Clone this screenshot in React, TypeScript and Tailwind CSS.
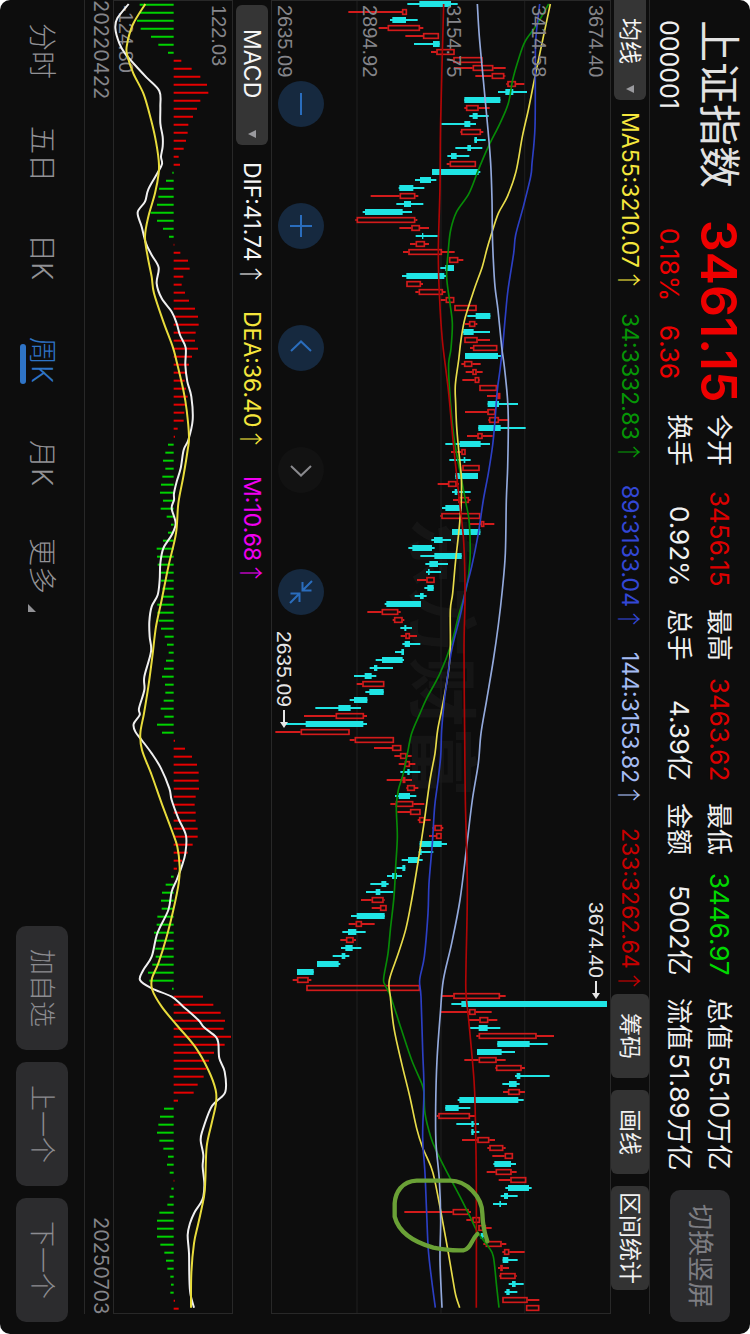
import React from "react";

type Candle = [kind: "r" | "c", low: number, start: number, end: number, high: number];
type Point = [number, number];

const STEP = 24;

const candles: Candle[] = [
  ["c", 412, 448, 543, 563], ["r", 235, 396, 411, 411], ["c", 360, 367, 408, 443], ["r", 326, 353, 450, 460],
  ["r", 406, 459, 507, 507], ["c", 432, 489, 509, 509], ["r", 483, 499, 554, 554], ["r", 540, 550, 638, 638],
  ["r", 552, 608, 670, 707], ["r", 616, 665, 703, 706], ["r", 709, 712, 738, 763], ["c", 684, 706, 730, 771],
  ["c", 583, 583, 691, 691], ["r", 583, 588, 626, 659], ["c", 598, 608, 623, 656], ["c", 514, 583, 601, 618],
  ["r", 571, 573, 633, 640], ["c", 613, 613, 621, 647], ["c", 556, 592, 603, 637], ["c", 532, 543, 560, 598],
  ["r", 530, 539, 618, 618], ["c", 486, 486, 626, 631], ["c", 435, 450, 483, 499], ["c", 386, 388, 430, 463],
  ["r", 302, 389, 436, 445], ["c", 379, 402, 423, 460], ["c", 278, 285, 398, 426], ["r", 256, 260, 436, 442],
  ["r", 388, 424, 450, 477], ["c", 437, 456, 460, 503], ["r", 420, 437, 465, 477], ["r", 399, 415, 516, 554],
  ["r", 537, 537, 565, 580], ["c", 511, 526, 552, 552], ["c", 396, 409, 523, 528], ["r", 409, 409, 453, 459],
  ["r", 436, 446, 519, 527], ["r", 512, 527, 553, 553], ["r", 553, 553, 620, 620], ["c", 592, 617, 661, 661],
  ["r", 585, 597, 616, 622], ["c", 579, 580, 611, 660], ["r", 583, 583, 623, 660], ["r", 600, 609, 682, 682],
  ["c", 585, 585, 684, 693], ["r", 574, 582, 607, 632], ["r", 587, 607, 620, 638], ["r", 577, 614, 628, 630],
  ["r", 628, 628, 681, 681], ["r", 651, 682, 691, 691], ["c", 653, 653, 687, 744], ["r", 585, 652, 676, 676],
  ["r", 655, 657, 687, 714], ["c", 625, 625, 692, 767], ["r", 591, 622, 638, 668], ["c", 526, 569, 632, 660],
  ["r", 543, 574, 587, 587], ["c", 538, 581, 586, 602], ["r", 577, 577, 629, 629], ["c", 556, 556, 624, 624],
  ["r", 503, 534, 560, 567], ["c", 546, 554, 562, 602], ["r", 549, 565, 597, 602], ["c", 516, 526, 575, 575],
  ["r", 511, 514, 631, 631], ["r", 600, 633, 643, 673], ["c", 546, 546, 631, 631], ["c", 484, 492, 518, 543],
  ["c", 415, 427, 486, 494], ["c", 451, 493, 575, 575], ["c", 466, 478, 504, 534], ["c", 468, 474, 479, 513],
  ["r", 441, 469, 494, 494], ["c", 463, 472, 491, 491], ["c", 434, 450, 461, 470], ["c", 344, 349, 453, 453],
  ["r", 292, 335, 385, 392], ["r", 368, 372, 398, 403], ["c", 391, 403, 409, 426], ["r", 392, 406, 420, 441],
  ["c", 397, 404, 420, 451], ["c", 375, 394, 402, 402], ["c", 317, 336, 398, 402], ["c", 299, 312, 322, 369],
  ["c", 252, 284, 305, 319], ["r", 260, 277, 343, 343], ["c", 286, 298, 341, 341], ["c", 239, 252, 292, 292],
  ["c", 136, 205, 242, 273], ["r", 102, 197, 282, 291], ["c", 45, 107, 280, 291], ["r", 16, 92, 239, 239],
  ["r", 239, 254, 372, 372], ["r", 312, 366, 394, 394], ["r", 373, 390, 410, 425], ["r", 386, 404, 420, 436],
  ["c", 391, 412, 419, 451], ["r", 350, 398, 406, 426], ["r", 409, 411, 435, 445], ["c", 375, 386, 420, 439],
  ["r", 361, 377, 430, 463], ["r", 382, 420, 452, 452], ["r", 443, 447, 465, 482], ["r", 487, 493, 516, 520],
  ["r", 477, 498, 515, 515], ["c", 449, 449, 515, 531], ["c", 446, 447, 455, 490], ["c", 395, 414, 447, 458],
  ["c", 379, 397, 406, 406], ["c", 351, 366, 381, 396], ["c", 301, 334, 349, 356], ["c", 288, 317, 331, 370],
  ["r", 273, 305, 341, 344], ["r", 305, 330, 350, 350], ["c", 243, 260, 344, 344], ["r", 236, 257, 276, 314],
  ["c", 217, 234, 259, 287], ["r", 211, 228, 251, 258], ["c", 213, 226, 248, 274], ["c", 188, 215, 226, 238],
  ["c", 141, 141, 206, 211], ["c", 81, 81, 131, 131], ["r", 68, 81, 116, 124], ["r", 109, 109, 450, 450],
  ["r", 514, 550, 690, 707], ["c", 544, 574, 1011, 1011], ["r", 511, 597, 617, 665], ["r", 597, 628, 655, 682],
  ["c", 600, 626, 653, 691], ["r", 619, 626, 800, 852], ["c", 682, 682, 779, 833], ["c", 621, 621, 695, 735],
  ["r", 583, 626, 680, 707], ["r", 676, 678, 755, 765], ["c", 735, 740, 751, 839], ["c", 697, 717, 740, 749],
  ["r", 699, 714, 750, 765], ["c", 563, 568, 745, 761], ["c", 526, 526, 566, 601], ["r", 500, 505, 600, 617],
  ["c", 559, 604, 611, 627], ["c", 604, 604, 611, 628], ["r", 576, 622, 658, 675], ["r", 652, 658, 700, 707],
  ["r", 667, 704, 729, 729], ["c", 670, 673, 723, 738], ["r", 650, 677, 725, 740], ["r", 686, 721, 769, 769],
  ["c", 706, 714, 777, 785], ["c", 692, 702, 714, 743], ["c", 669, 688, 693, 711], ["r", 403, 548, 596, 603],
  ["r", 589, 607, 630, 630], ["r", 625, 625, 648, 665], ["c", 630, 632, 640, 645], ["r", 640, 647, 695, 709],
  ["r", 697, 702, 718, 764], ["c", 698, 698, 715, 743], ["r", 684, 691, 698, 717], ["r", 688, 690, 737, 740],
  ["c", 716, 726, 737, 761], ["c", 704, 709, 719, 742], ["r", 697, 697, 773, 808], ["r", 768, 768, 808, 808],
];

const averages: { name: string; stroke: string; points: Point[] }[] = [
  {
    name: "MA34", stroke: "#078a07",
    points: [[836, 12], [800, 75], [765, 125], [745, 180], [728, 240], [715, 310], [690, 370], [655, 440], [625, 510], [597, 580], [560, 635], [542, 690], [535, 750], [530, 830], [540, 910], [547, 970], [543, 1045], [536, 1090], [538, 1160], [546, 1260], [556, 1340], [573, 1430], [588, 1510], [598, 1570], [600, 1680], [590, 1760], [565, 1850], [543, 1935], [510, 2020], [470, 2095], [450, 2140], [425, 2200], [412, 2262], [400, 2320], [385, 2370], [379, 2420], [382, 2510], [377, 2600], [372, 2690], [362, 2780], [354, 2860], [341, 2935], [345, 2955], [362, 2990], [393, 3085], [425, 3180], [455, 3250], [462, 3280], [465, 3340], [482, 3410], [500, 3455], [530, 3515], [570, 3590], [600, 3650], [625, 3700], [655, 3740], [670, 3770], [680, 3860], [687, 3923]],
  },
  {
    name: "MA55", stroke: "#e8dc4a",
    points: [[841, 12], [818, 120], [795, 230], [775, 330], [757, 410], [738, 515], [712, 590], [685, 640], [665, 700], [650, 750], [637, 800], [612, 870], [585, 955], [573, 1020], [566, 1080], [556, 1155], [557, 1210], [560, 1280], [566, 1350], [574, 1430], [574, 1500], [571, 1545], [566, 1600], [556, 1690], [548, 1780], [541, 1830], [541, 1940], [536, 2010], [518, 2115], [503, 2190], [495, 2260], [480, 2340], [462, 2470], [445, 2580], [425, 2700], [408, 2785], [385, 2860], [358, 2940], [361, 2990], [372, 3085], [395, 3190], [419, 3288], [440, 3385], [457, 3440], [484, 3503], [495, 3545], [512, 3632], [530, 3730], [548, 3835], [557, 3885], [569, 3923]],
  },
  {
    name: "MA89", stroke: "#2c3fc4",
    points: [[809, 12], [798, 110], [796, 180], [795, 380], [786, 490], [782, 530], [760, 620], [737, 705], [731, 760], [714, 870], [706, 950], [698, 1040], [690, 1110], [682, 1170], [675, 1260], [668, 1335], [655, 1420], [640, 1500], [625, 1600], [605, 1700], [587, 1770], [570, 1850], [545, 1950], [530, 2050], [522, 2110], [515, 2190], [512, 2270], [503, 2350], [494, 2420], [487, 2530], [477, 2650], [474, 2740], [463, 2870], [449, 2940], [453, 2990], [458, 3150], [462, 3270], [458, 3410], [465, 3520], [470, 3640], [475, 3750], [485, 3840], [496, 3923]],
  },
  {
    name: "MA144", stroke: "#93a9dc",
    points: [[622, 12], [628, 110], [640, 240], [654, 390], [662, 490], [666, 600], [667, 700], [670, 780], [675, 860], [684, 930], [695, 1040], [703, 1100], [712, 1190], [715, 1260], [713, 1400], [709, 1500], [706, 1660], [697, 1770], [685, 1875], [670, 1980], [650, 2100], [633, 2200], [625, 2290], [607, 2400], [590, 2540], [570, 2700], [545, 2830], [520, 2940], [511, 3040], [501, 3180], [497, 3320], [498, 3430], [508, 3540], [512, 3660], [510, 3780], [516, 3923]],
  },
  {
    name: "MA233", stroke: "#b00505",
    points: [[521, 12], [512, 360], [510, 560], [505, 750], [508, 880], [517, 1020], [535, 1170], [550, 1330], [568, 1500], [580, 1610], [584, 1700], [585, 1800], [582, 1950], [584, 2200], [586, 2400], [592, 2660], [588, 2900], [588, 2980], [597, 3070], [612, 3240], [616, 3350], [619, 3550], [619, 3923]],
  },
];

const MACD_ZERO = 281;

const macdBars: number[] = [
  179, 178, 171, 182, 213, 235, 264, 304, 335, 361, 381, 385, 361, 351, 339, 325, 323, 318, 311, 296, 300, 277,
  258, 237, 235, 231, 212, 231, 249, 267, 283, 301, 324, 329, 310, 305, 315, 327, 345, 354, 356, 347, 345, 354,
  336, 327, 320, 314, 318, 323, 318, 313, 311, 293, 285, 264, 256, 249, 256, 247, 243, 240, 249, 242, 260, 273,
  264, 249, 230, 231, 233, 238, 243, 247, 245, 232, 232, 236, 243, 254, 261, 266, 258, 252, 246, 255, 256, 251,
  242, 253, 231, 246, 285, 315, 336, 351, 356, 356, 357, 347, 344, 347, 347, 353, 353, 338, 323, 306, 291, 273,
  257, 246, 243, 245, 232, 230, 222, 224, 226, 227, 217, 204, 208, 276, 369, 400, 422, 435, 431, 453, 434, 402,
  387, 379, 371, 353, 341, 294, 252, 240, 235, 231, 238, 250, 264, 261, 269, 283, 274, 269, 262, 238, 231, 231,
  231, 241, 253, 258, 262, 271, 273, 271, 285, 296,
];

const dif: Point[] = [[146, 12], [112, 55], [106, 85], [118, 130], [135, 160], [165, 195], [200, 233], [238, 273], [241, 320], [241, 370], [248, 410], [248, 440], [243, 470], [246, 492], [232, 520], [205, 568], [195, 605], [173, 637], [185, 680], [198, 730], [215, 765], [236, 803], [230, 850], [245, 895], [275, 935], [290, 970], [300, 1005], [317, 1043], [316, 1095], [322, 1145], [334, 1190], [338, 1260], [325, 1320], [311, 1350], [302, 1405], [290, 1445], [282, 1480], [282, 1500], [275, 1525], [287, 1570], [275, 1605], [250, 1645], [241, 1690], [239, 1740], [233, 1785], [215, 1820], [208, 1865], [209, 1910], [213, 1955], [193, 2030], [193, 2070], [177, 2125], [179, 2145], [161, 2172], [166, 2195], [185, 2220], [215, 2260], [243, 2305], [268, 2365], [275, 2400], [295, 2455], [318, 2507], [316, 2560], [305, 2600], [290, 2640], [275, 2675], [265, 2730], [232, 2800], [215, 2870], [190, 2910], [180, 2940], [215, 2965], [275, 2990], [310, 3020], [355, 3060], [372, 3082], [407, 3110], [415, 3130], [418, 3175], [434, 3215], [436, 3275], [410, 3303], [392, 3325], [368, 3390], [362, 3420], [370, 3465], [368, 3500], [373, 3550], [370, 3590], [360, 3612], [343, 3638], [330, 3670], [323, 3705], [327, 3760], [328, 3830], [331, 3880], [342, 3923]];

const dea: Point[] = [[196, 12], [158, 75], [140, 140], [143, 170], [160, 220], [190, 280], [208, 340], [225, 410], [236, 480], [236, 520], [225, 580], [205, 650], [195, 710], [203, 770], [215, 830], [222, 880], [250, 965], [278, 1040], [290, 1085], [310, 1170], [320, 1230], [327, 1310], [323, 1350], [310, 1430], [295, 1510], [288, 1600], [265, 1700], [245, 1800], [228, 1880], [217, 1970], [205, 2060], [192, 2140], [181, 2200], [186, 2250], [215, 2325], [245, 2410], [275, 2490], [292, 2540], [299, 2600], [296, 2650], [280, 2730], [260, 2810], [235, 2890], [216, 2935], [217, 2970], [245, 3020], [290, 3075], [345, 3140], [385, 3210], [407, 3270], [408, 3310], [395, 3370], [380, 3440], [376, 3540], [372, 3590], [355, 3670], [342, 3730], [334, 3820], [333, 3923]];

/** Catmull-Rom spline through the points, written as cubic Béziers. */
function smoothPath(points: Point[]) {
  let d = `M${points[0][0]} ${points[0][1]}`;
  for (let i = 0; i < points.length - 1; i++) {
    const before = points[Math.max(i - 1, 0)];
    const from = points[i];
    const to = points[i + 1];
    const after = points[Math.min(i + 2, points.length - 1)];
    const c1x = from[0] + (to[0] - before[0]) / 6;
    const c1y = from[1] + (to[1] - before[1]) / 6;
    const c2x = to[0] - (after[0] - from[0]) / 6;
    const c2y = to[1] - (after[1] - from[1]) / 6;
    d += `C${c1x} ${c1y} ${c2x} ${c2y} ${to[0]} ${to[1]}`;
  }
  return d;
}

const quotes = [
  { label: "今开", value: "3456.15", tone: "text-[#dc0000]" },
  { label: "最高", value: "3463.62", tone: "text-[#dc0000]" },
  { label: "最低", value: "3446.97", tone: "text-[#00d800]" },
  { label: "总值", value: "55.10万亿", tone: "text-[#f0f0f0]" },
  { label: "换手", value: "0.92%", tone: "text-[#f0f0f0]" },
  { label: "总手", value: "4.39亿", tone: "text-[#f0f0f0]" },
  { label: "金额", value: "5002亿", tone: "text-[#f0f0f0]" },
  { label: "流值", value: "51.89万亿", tone: "text-[#f0f0f0]" },
];

const maLegend = [
  { text: "MA55:3210.07", tone: "text-[#f5e63c]" },
  { text: "34:3332.83", tone: "text-[#069606]" },
  { text: "89:3133.04", tone: "text-[#3347d6]" },
  { text: "144:3153.82", tone: "text-[#a5bcf5]" },
  { text: "233:3262.64", tone: "text-[#c80000]" },
];

const macdLegend = [
  { text: "DIF:41.74", tone: "text-[#f5f5f5]" },
  { text: "DEA:36.40", tone: "text-[#f5e63c]" },
  { text: "M:10.68", tone: "text-[#f000f0]" },
];

const axisLabels = [
  { text: "2635.09", place: "left-[1%]" },
  { text: "2894.92", place: "left-[26%]" },
  { text: "3154.75", place: "left-[51%]" },
  { text: "3414.58", place: "left-[76%]" },
  { text: "3674.40", place: "left-[93%]" },
];

const controls = [
  { label: "缩小", enabled: true, d: "M23 12v22" },
  { label: "放大", enabled: true, d: "M23 12v22M12 23h22" },
  { label: "向前", enabled: true, d: "M13 26L23 16.500L33 26" },
  { label: "向后", enabled: false, d: "M13 19L23 28.500L33 19" },
  { label: "收起", enabled: true, d: "M24.500 13v8.500h9M24.500 21.500L34 12M21.500 33v-8.500h-9M21.500 24.500L12 34" },
];

const tabs = ["分时", "五日", "日K", "周K", "月K", "更多"];

function Picker({ label, value, frame, inset }: { label: string; value: string; frame: string; inset: string }) {
  return (
    <label className={`relative flex w-8 shrink-0 items-center bg-[#353535] ${frame}`}>
      <select
        aria-label={label}
        defaultValue={value}
        className={`h-full w-full appearance-none bg-transparent text-[23px] leading-8 text-[#f5f5f5] outline-none ${inset}`}
      >
        <option>{value}</option>
      </select>
      <svg viewBox="0 0 8 8" className="pointer-events-none absolute bottom-[7px] left-3 size-2" aria-hidden="true">
        <path d="M8 0v8L0 4z" fill="#9a9a9e" />
      </svg>
    </label>
  );
}

function Legend({ items }: { items: { text: string; tone: string }[] }) {
  return (
    <>
      {items.map((item) => (
        <span key={item.text} className={`flex shrink-0 items-center text-[23px] leading-8 ${item.tone}`}>
          {item.text}
          <span className="font-['Noto_Sans_CJK_SC',sans-serif] text-2xl leading-8 font-light">↑</span>
        </span>
      ))}
    </>
  );
}

function Extreme({ value, place }: { value: string; place: string }) {
  return (
    <span className={`absolute flex items-center gap-[3px] text-[21px] text-[#e6e6e6] ${place}`}>
      {value}
      <svg viewBox="0 0 8 18" className="h-[18px] w-2" aria-hidden="true">
        <path d="M4 0v14" stroke="currentColor" strokeWidth="2" />
        <path d="M0 12h8L4 18z" fill="currentColor" />
      </svg>
    </span>
  );
}

function PriceChart() {
  return (
    <section aria-label="K线图" className="relative mb-5 min-w-0 flex-1 border border-[#282828]">
      <div className="absolute inset-0 flex items-center justify-center text-[70px] leading-none font-bold text-[#151515]">
        东方财富
      </div>
      <svg viewBox="6 3 1014 3936" preserveAspectRatio="none" className="absolute inset-0 h-full w-full" aria-hidden="true">
        <path d="M261 0V3942M513 0V3942M764 0V3942" stroke="#1b1b1b" strokeWidth="4" />
        {candles.map(([kind, low, start, end, high], i) => {
          const y = 12 + i * STEP;
          if (kind === "c") {
            return (
              <g key={i} fill="#1fe4e4">
                <rect x={low} y={y - 3} width={high - low} height="6" />
                <rect x={start} y={y - 9} width={end - start} height="18" />
              </g>
            );
          }
          return (
            <g key={i} stroke="#d21b1b" fill="none">
              <path d={`M${low} ${y}H${start}M${end} ${y}H${high}`} strokeWidth="6" />
              <rect x={start + 2} y={y - 7} width={Math.max(end - start - 4, 2)} height="14" strokeWidth="5" />
            </g>
          );
        })}
        {averages.map((line) => (
          <path key={line.name} d={smoothPath(line.points)} fill="none" stroke={line.stroke} strokeWidth="5" />
        ))}
        <path
          d="M652 3724C640 3690 638 3670 637 3640C636 3590 590 3542 540 3542H440C395 3544 376 3578 374 3610V3650C386 3696 430 3726 490 3743C530 3751 560 3752 580 3751C602 3748 602 3722 622 3702"
          fill="none"
          stroke="#6aa136"
          strokeWidth="13"
          strokeLinecap="round"
          strokeLinejoin="round"
        />
      </svg>
      <div className="font-['Liberation_Sans',sans-serif] text-xl leading-5 text-[#85858a]">
        {axisLabels.map((label) => (
          <span key={label.text} className={`absolute top-1 ${label.place}`}>
            {label.text}
          </span>
        ))}
        <Extreme value="2635.09" place="top-[48%] left-0.5" />
        <Extreme value="3674.40" place="top-[68.7%] right-1" />
      </div>
      <div className="absolute top-20 left-1.5 flex gap-[76px]">
        {controls.map((control) => (
          <button
            key={control.label}
            type="button"
            aria-label={control.label}
            disabled={!control.enabled}
            className={
              control.enabled
                ? "size-[46px] rounded-full bg-[#16293f] text-[#2a6dbd]"
                : "size-[46px] rounded-full bg-[#121212] text-[#8a8a8e]"
            }
          >
            <svg viewBox="0 0 46 46" className="block size-[46px]" fill="none" stroke="currentColor" strokeWidth="2">
              <path d={control.d} />
            </svg>
          </button>
        ))}
      </div>
    </section>
  );
}

function MacdChart() {
  return (
    <section aria-label="MACD图" className="relative mb-5 w-[120px] shrink-0 border border-[#282828]">
      <div className="font-['Liberation_Sans',sans-serif] text-xl leading-5 text-[#85858a]">
        <span className="absolute top-1 right-[3px]">122.03</span>
        <span className="absolute top-1 left-0.5">-124.80</span>
      </div>
      <svg viewBox="102 3 354 3936" preserveAspectRatio="none" className="absolute inset-0 h-full w-full" aria-hidden="true">
        {macdBars.map((end, i) => (
          <path
            key={i}
            d={`M${MACD_ZERO} ${14 + i * STEP}H${end}`}
            stroke={end > MACD_ZERO ? "#e60000" : "#00d200"}
            strokeWidth="6"
          />
        ))}
        <path d={smoothPath(dif)} fill="none" stroke="#f0f0f0" strokeWidth="6" />
        <path d={smoothPath(dea)} fill="none" stroke="#e8dc3c" strokeWidth="6" />
      </svg>
    </section>
  );
}

export default function App() {
  return (
    <main className="flex h-dvh min-h-[1300px] w-full flex-col overflow-hidden rounded-[10px] bg-[#0d0d0d] font-[Inter,'Noto_Sans_CJK_SC',sans-serif] text-[#f0f0f0] [text-orientation:sideways] [writing-mode:vertical-rl]">
      <header className="flex w-[100px] shrink-0 pt-5 pr-[9px] pb-3">
        <div className="flex h-[200px] shrink-0 flex-col gap-[11px]">
          <h1 className="text-[42px] leading-[44px] font-normal whitespace-nowrap text-[#e2e2e2]">上证指数</h1>
          <p className="text-[25px] leading-[34px]">000001</p>
        </div>
        <div className="flex h-[194px] shrink-0 flex-col gap-[11px] text-[#ee0000]">
          <strong className="text-[50px] leading-[44px] font-semibold">3461.15</strong>
          <p className="flex gap-6 pt-2 text-[26px] leading-[34px]">
            <span>0.18%</span>
            <span>6.36</span>
          </p>
        </div>
        <dl className="grid flex-1 grid-cols-4 content-start gap-x-[22px] pr-0.5 text-[26px] leading-10 whitespace-nowrap">
          {quotes.map((quote) => (
            <div key={quote.label} className="flex justify-between">
              <dt>{quote.label}</dt>
              <dd className={quote.tone}>{quote.value}</dd>
            </div>
          ))}
        </dl>
        <button
          type="button"
          className="mt-5 mr-[11px] h-[132px] w-[60px] shrink-0 rounded-[10px] bg-[#2c2c2e] text-[26px] leading-8 text-[#7d7d82]"
        >
          切换竖屏
        </button>
      </header>

      <div className="mb-5 flex w-[39px] shrink-0 items-center border-r border-[#282828]">
        <Picker label="均线" value="均线" frame="h-[100px] rounded-b-md" inset="pt-[18px]" />
        <div className="flex min-h-0 flex-1 gap-[21px] pt-3">
          <Legend items={maLegend} />
        </div>
        <div className="flex gap-3 pb-6 text-[23px] leading-8">
          <button type="button" className="h-[84px] w-[38px] rounded-md bg-[#333]">筹码</button>
          <button type="button" className="h-[84px] w-[38px] rounded-md bg-[#333]">画线</button>
          <button type="button" className="h-[104px] w-[38px] rounded-md bg-[#333] whitespace-nowrap">区间统计</button>
        </div>
      </div>

      <PriceChart />

      <div className="mb-5 flex w-[38px] shrink-0 items-center gap-[25px] pt-[5px]">
        <Picker label="指标" value="MACD" frame="-mb-2 h-[140px] rounded-md" inset="pt-6" />
        <Legend items={macdLegend} />
      </div>

      <MacdChart />

      <div className="mb-5 flex w-[29px] shrink-0 items-center justify-between border-l border-[#282828] pl-[3px] text-xl leading-6 text-[#85858a]">
        <time dateTime="2022-04-22">20220422</time>
        <time dateTime="2025-07-03">20250703</time>
      </div>

      <footer className="flex shrink-0 grow-0 basis-[84px] items-center justify-between pb-3">
        <nav className="flex">
          {tabs.map((tab) => (
            <a
              key={tab}
              href={`#${tab}`}
              aria-current={tab === "周K" ? "page" : undefined}
              className={
                tab === "周K"
                  ? "relative flex h-[103px] w-10 items-center justify-center text-[28px] leading-10 font-light text-[#2f74c6]"
                  : "relative flex h-[103px] w-10 items-center justify-center text-[28px] leading-10 font-light text-[#929296]"
              }
            >
              {tab}
              {tab === "周K" && <span className="absolute top-[35px] -left-0.5 h-10 w-1.5 rounded-full bg-[#2f74c6]" />}
              {tab === "更多" && (
                <svg viewBox="0 0 8 8" className="absolute bottom-1.5 left-1.5 size-2" aria-hidden="true">
                  <path d="M0 0L8 8H0z" fill="#929296" />
                </svg>
              )}
            </a>
          ))}
        </nav>
        <div className="flex gap-3 text-[26px] leading-8 font-light text-[#8c8c91]">
          <button type="button" className="h-[124px] w-[52px] rounded-[10px] bg-[#2c2c2e]">加自选</button>
          <button type="button" className="h-[124px] w-[52px] rounded-[10px] bg-[#2c2c2e]">上一个</button>
          <button type="button" className="h-[124px] w-[52px] rounded-[10px] bg-[#2c2c2e]">下一个</button>
        </div>
      </footer>
    </main>
  );
}
